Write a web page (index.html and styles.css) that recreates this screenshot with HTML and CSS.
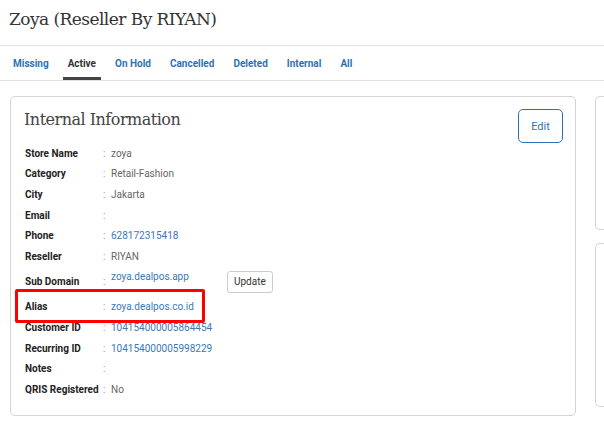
FILE: index.html
```html
<!DOCTYPE html>
<html lang="en">
<head>
    <meta charset="UTF-8">
    <meta name="viewport" content="width=device-width, initial-scale=1.0">
    <title>Zoya (Reseller By RIYAN)</title>
    <link rel="stylesheet" href="styles.css">
</head>
<body>
    <!-- Page Title -->
    <header class="page-title">
        <h1>Zoya (Reseller By RIYAN)</h1>
    </header>

    <!-- Tabs -->
    <nav class="tabs">
        <a href="#">Missing</a>
        <a href="#" class="active">Active</a>
        <a href="#">On Hold</a>
        <a href="#">Cancelled</a>
        <a href="#">Deleted</a>
        <a href="#">Internal</a>
        <a href="#">All</a>
    </nav>

    <div class="content">
        <!-- Internal Information Card -->
        <section class="card info-card">
            <div class="card-header">
                <h2>Internal Information</h2>
                <button class="btn-edit">Edit</button>
            </div>

            <div class="info-row">
                <span class="label">Store Name</span><span class="colon">:</span><span class="value">zoya</span>
            </div>
            <div class="info-row">
                <span class="label">Category</span><span class="colon">:</span><span class="value">Retail-Fashion</span>
            </div>
            <div class="info-row">
                <span class="label">City</span><span class="colon">:</span><span class="value">Jakarta</span>
            </div>
            <div class="info-row">
                <span class="label">Email</span><span class="colon">:</span><span class="value"></span>
            </div>
            <div class="info-row">
                <span class="label">Phone</span><span class="colon">:</span><a href="#" class="value link">628172315418</a>
            </div>
            <div class="info-row">
                <span class="label">Reseller</span><span class="colon">:</span><span class="value">RIYAN</span>
            </div>
            <div class="info-row tall">
                <span class="label">Sub Domain</span><span class="colon">:</span>
                <span class="value domain">
                    <a href="#" class="link">zoya.dealpos.app</a>
                    <button class="btn-update">Update</button>
                </span>
            </div>
            <div class="info-row">
                <span class="highlight"></span>
                <span class="label">Alias</span><span class="colon">:</span><a href="#" class="value link">zoya.dealpos.co.id</a>
            </div>
            <div class="info-row">
                <span class="label">Customer ID</span><span class="colon">:</span><a href="#" class="value link">104154000005864454</a>
            </div>
            <div class="info-row">
                <span class="label">Recurring ID</span><span class="colon">:</span><a href="#" class="value link">104154000005998229</a>
            </div>
            <div class="info-row">
                <span class="label">Notes</span><span class="colon">:</span><span class="value"></span>
            </div>
            <div class="info-row">
                <span class="label">QRIS Registered</span><span class="colon">:</span><span class="value">No</span>
            </div>
        </section>

        <!-- Side Cards -->
        <aside class="side">
            <div class="card side-top"></div>
            <div class="card side-bottom"></div>
        </aside>
    </div>
</body>
</html>
```

FILE: styles.css
```css
/* General Styles */
* {
    margin: 0;
    padding: 0;
    box-sizing: border-box;
}

body {
    font-family: Roboto, "Liberation Sans", Arial, sans-serif;
    font-size: 10px;
    color: #333;
    background: #fff;
    overflow: hidden;
    width: 604px;
    height: 439px;
}

a {
    text-decoration: none;
}

/* Title */
.page-title {
    height: 46px;
    padding: 8px 9px 0;
    border-bottom: 1px solid #e2e2e2;
}

.page-title h1 {
    font-family: "DejaVu Serif", serif;
    font-weight: 400;
    font-size: 17px;
    line-height: 22px;
    color: #333;
    letter-spacing: -0.55px;
}

/* Tabs */
.tabs {
    display: flex;
    gap: 9px;
    height: 35px;
    padding-left: 8px;
    border-bottom: 1px solid #e2e2e2;
}

.tabs a {
    display: flex;
    align-items: center;
    padding: 3px 5px 0;
    font-weight: 700;
    color: #2f72b3;
    border-bottom: 3px solid transparent;
}

.tabs a.active {
    color: #333;
    border-bottom-color: #444;
}

/* Content */
.content {
    display: flex;
    gap: 19px;
    padding: 15px 0 15px 10px;
}

.card {
    border: 1px solid #d4d4d4;
    border-radius: 5px;
    background: #fff;
}

.info-card {
    flex-shrink: 0;
    width: 566px;
    height: 320px;
    padding: 12px 12px 15px 14px;
}

.card-header {
    display: flex;
    justify-content: space-between;
    align-items: flex-start;
}

.card-header h2 {
    font-family: "DejaVu Serif", serif;
    font-weight: 400;
    font-size: 16px;
    line-height: 22px;
    color: #444;
    letter-spacing: -0.5px;
    margin-left: -1px;
}

.btn-edit {
    width: 45px;
    height: 34px;
    border: 1px solid #2f72b3;
    border-radius: 5px;
    background: #fff;
    color: #2f72b3;
    font-family: inherit;
    font-size: 11px;
}

/* Info rows */
.info-row {
    position: relative;
    display: grid;
    grid-template-columns: 78px 8px 1fr;
    align-items: center;
    height: 20.6px;
}

.info-row.tall {
    height: 30px;
}

.label {
    font-weight: 700;
    color: #222;
}

.colon {
    color: #999;
}

.value {
    color: #666;
}

.link {
    color: #3b79b6;
}

.value.domain {
    display: flex;
    align-self: stretch;
    align-items: center;
}

.value.domain .link {
    align-self: flex-start;
    width: 116px;
    line-height: 20px;
}

.btn-update {
    height: 22px;
    padding: 0 6px;
    border: 1px solid #ccc;
    border-radius: 3px;
    background: #fff;
    color: #333;
    font-family: inherit;
    font-size: 10px;
}

/* Red annotation box */
.highlight {
    position: absolute;
    left: -10px;
    top: -8px;
    width: 190px;
    height: 34px;
    border: 3px solid #ff0000;
    border-radius: 2px;
}

/* Side column (cut off by the window edge) */
.side {
    flex: 1;
    min-width: 0;
    display: flex;
    flex-direction: column;
    gap: 13px;
}

.side .card {
    border-right: none;
    border-radius: 5px 0 0 5px;
}

.side-top {
    height: 134px;
}

.side-bottom {
    height: 164px;
}
```
